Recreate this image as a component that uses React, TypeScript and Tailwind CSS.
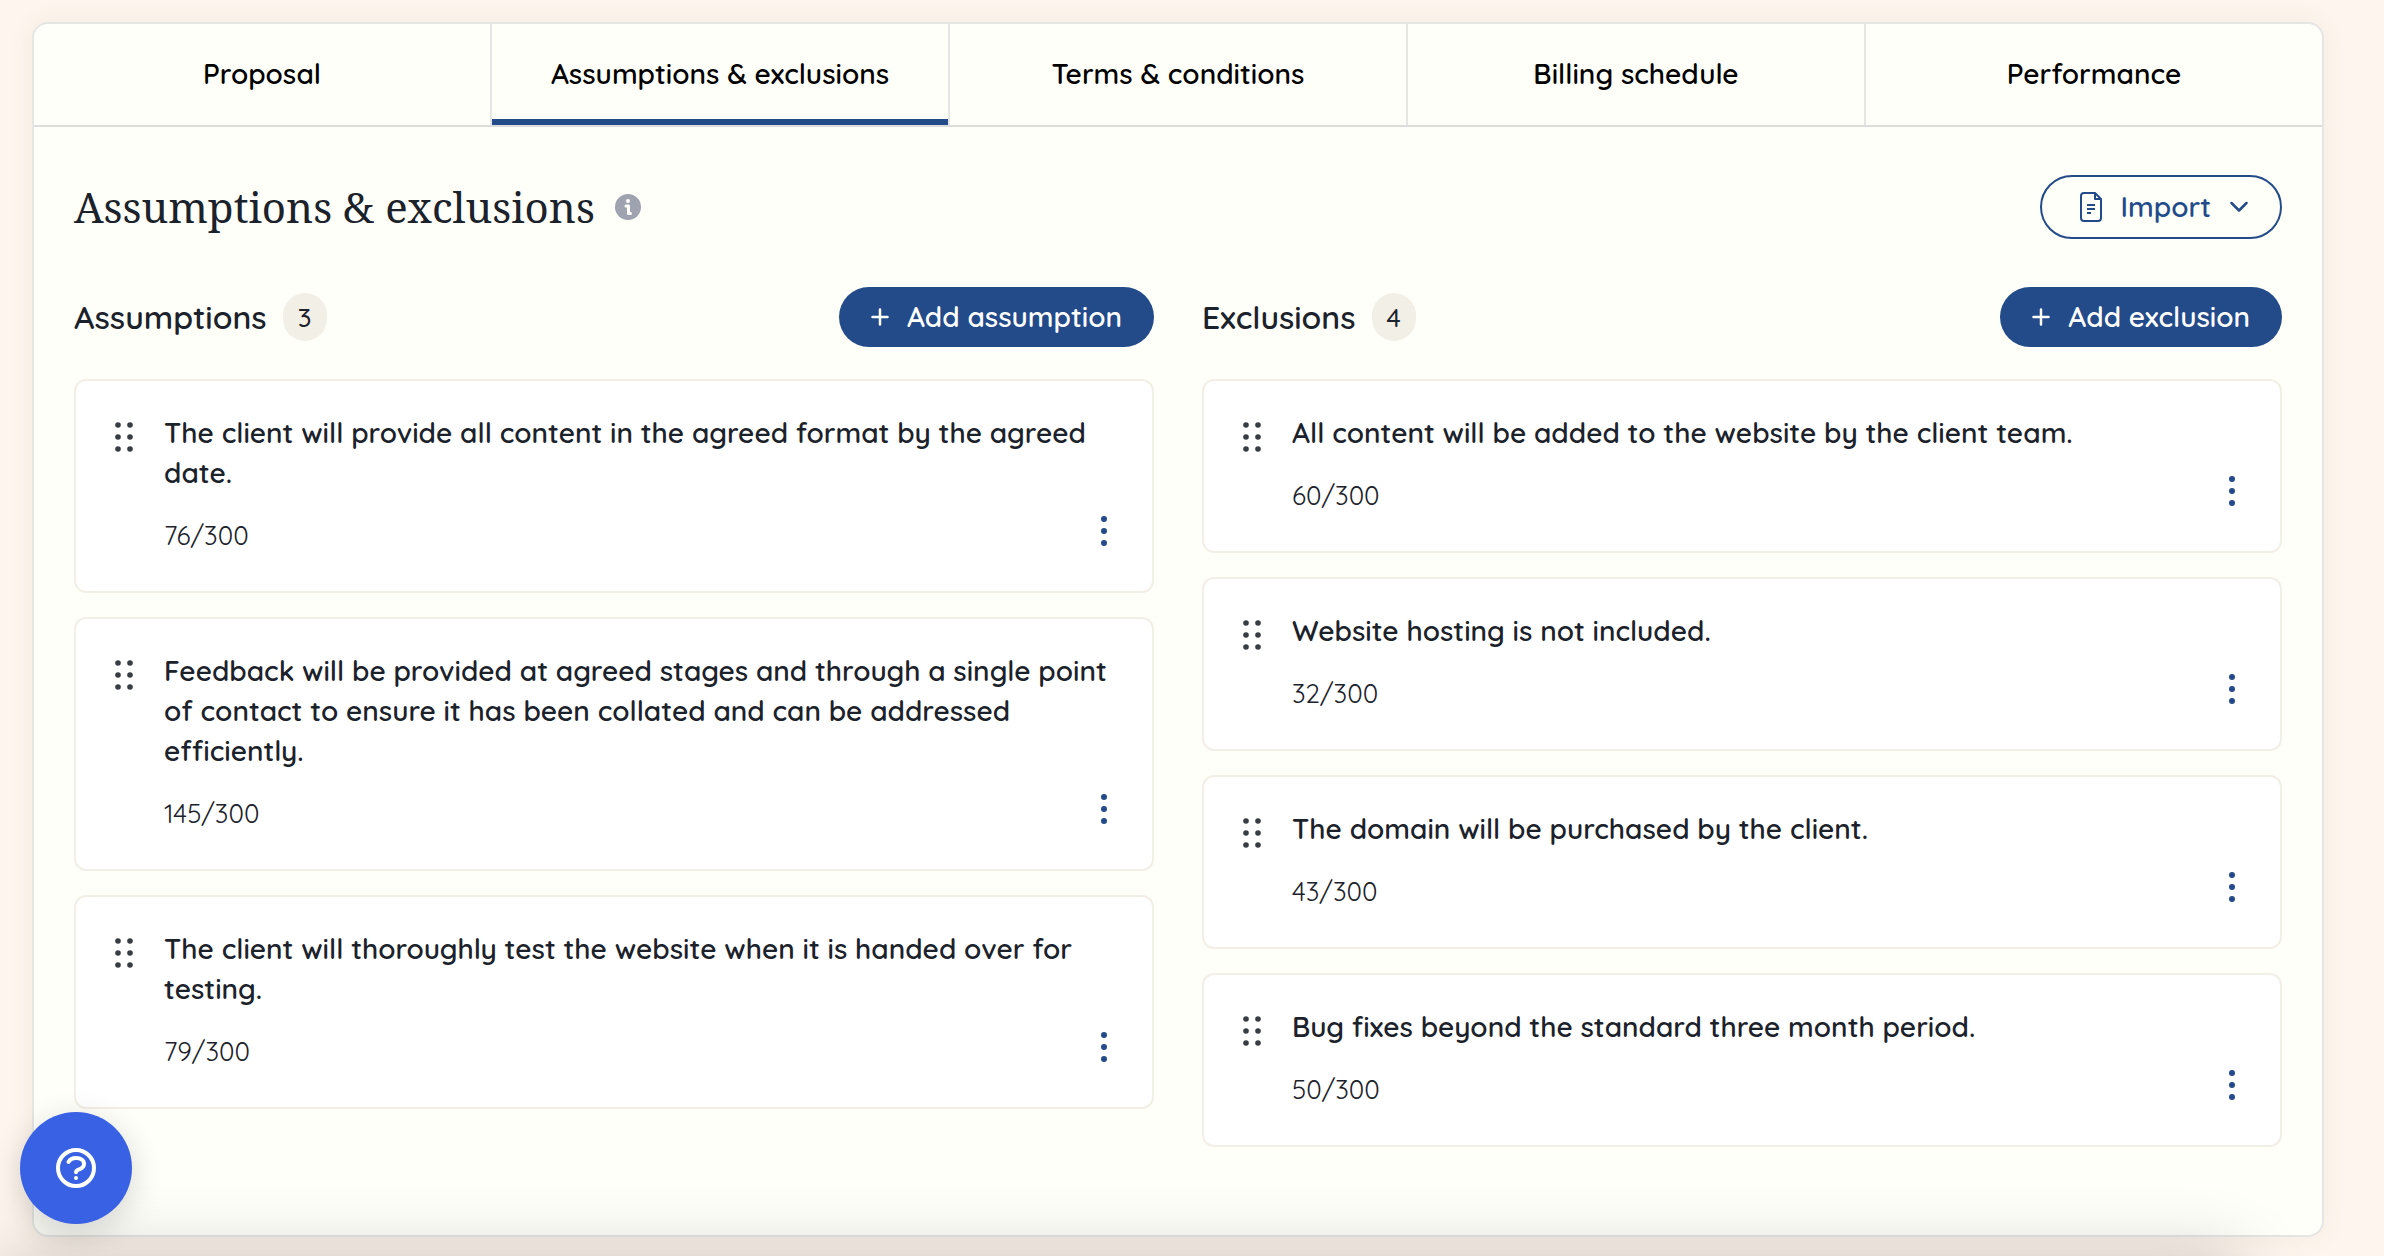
const tabs = ["Proposal", "Assumptions & exclusions", "Terms & conditions", "Billing schedule", "Performance"];

type Item = { text: string; count: string };

const assumptions: Item[] = [
  { text: "The client will provide all content in the agreed format by the agreed date.", count: "76/300" },
  {
    text: "Feedback will be provided at agreed stages and through a single point of contact to ensure it has been collated and can be addressed efficiently.",
    count: "145/300",
  },
  { text: "The client will thoroughly test the website when it is handed over for testing.", count: "79/300" },
];

const exclusions: Item[] = [
  { text: "All content will be added to the website by the client team.", count: "60/300" },
  { text: "Website hosting is not included.", count: "32/300" },
  { text: "The domain will be purchased by the client.", count: "43/300" },
  { text: "Bug fixes beyond the standard three month period.", count: "50/300" },
];

function GripIcon() {
  return (
    <svg width="20" height="32" viewBox="0 0 20 32" fill="#373d42" aria-hidden="true">
      {[4, 16].map((x) => [4, 16, 28].map((y) => <circle key={`${x}-${y}`} cx={x} cy={y} r="2.800" />))}
    </svg>
  );
}

function KebabIcon() {
  return (
    <svg width="6" height="30" viewBox="0 0 6 30" fill="#234b8a" aria-hidden="true">
      <circle cx="3" cy="3" r="3" />
      <circle cx="3" cy="15" r="3" />
      <circle cx="3" cy="27" r="3" />
    </svg>
  );
}

function PlusIcon() {
  return (
    <svg width="18" height="18" viewBox="0 0 18 18" fill="none" stroke="currentColor" strokeWidth="2.500" strokeLinecap="round" aria-hidden="true">
      <path d="M9 1.500v15M1.500 9h15" />
    </svg>
  );
}

function FileIcon() {
  return (
    <svg width="22" height="30" viewBox="0 0 22 30" fill="none" stroke="currentColor" strokeWidth="2" aria-hidden="true">
      <path d="M15 1H4a3 3 0 0 0-3 3v22a3 3 0 0 0 3 3h14a3 3 0 0 0 3-3V7L15 1v6h6" strokeLinejoin="round" />
      <path d="M7 13h8M7 17h8M7 21h4" />
    </svg>
  );
}

function InfoIcon() {
  return (
    <svg width="26" height="26" viewBox="0 0 26 26" aria-hidden="true">
      <circle cx="13" cy="13" r="13" fill="#9fa3b0" />
      <circle cx="13" cy="7" r="2" fill="#fffffa" />
      <path d="M11 12h2.500v7.500H15.500" fill="none" stroke="#fffffa" strokeWidth="3" strokeLinecap="round" strokeLinejoin="round" />
    </svg>
  );
}

function ItemCard({ item }: { item: Item }) {
  return (
    <li className="flex rounded-xl border-2 border-[#f2efe7] bg-white px-9 pt-8 pb-[30px]">
      <button type="button" aria-label="Reorder" className="mt-1.5 ml-0.5 h-9 w-5 shrink-0 cursor-grab">
        <GripIcon />
      </button>
      <div className="ml-[30px] min-w-0 flex-1">
        <p className="text-[28px] leading-10 font-semibold">{item.text}</p>
        <div className="mt-2 flex items-center justify-between">
          <span className="pt-2.5 text-[26px] leading-10 font-normal">{item.count}</span>
          <button type="button" aria-label="More options" className="flex h-[60px] w-6 items-center justify-center">
            <KebabIcon />
          </button>
        </div>
      </div>
    </li>
  );
}

function Column({ title, items, action }: { title: string; items: Item[]; action: string }) {
  return (
    <section className="min-w-0 flex-1">
      <header className="flex items-center justify-between">
        <div className="flex items-center gap-4">
          <h2 className="text-[32px] leading-10 font-semibold">{title}</h2>
          <span className="flex h-12 w-11 items-center justify-center rounded-full bg-[#f2efe7] text-[26px] font-medium">
            {items.length}
          </span>
        </div>
        <button type="button" className="flex h-[60px] items-center gap-[18px] rounded-full bg-[#234b8a] px-8 text-[28px] font-semibold text-white">
          <PlusIcon />
          {action}
        </button>
      </header>
      <ul className="mt-8 flex flex-col gap-6">
        {items.map((item) => (
          <ItemCard key={item.text} item={item} />
        ))}
      </ul>
    </section>
  );
}

export default function App() {
  return (
    <div className="relative min-h-screen overflow-hidden bg-[#fef5ee] pt-[22px] pr-[60px] pb-[19px] pl-8 font-[Quicksand,Lato,sans-serif] text-[#1b222b]">
      <main className="rounded-2xl border-2 border-[#e5e6e4] bg-[#fffffa] shadow-[0_0_24px_rgba(120,130,90,0.08)]">
        <nav className="flex border-b-2 border-[#dcdddc]">
          {tabs.map((tab, i) => (
            <button
              key={tab}
              type="button"
              aria-current={i === 1 ? "page" : undefined}
              className="flex h-[101px] flex-1 items-center justify-center border-r-2 border-[#e5e6e4] pb-0.5 text-[28px] font-semibold text-black last:border-r-0 aria-[current=page]:shadow-[inset_0_-6px_0_#234b8a]"
            >
              {tab}
            </button>
          ))}
        </nav>
        <div className="px-10 pt-12 pb-[88px]">
          <header className="flex items-center justify-between">
            <div className="flex items-center gap-5">
              <h1 className="font-['Noto_Serif','Liberation_Serif',serif] text-[42px] leading-[64px] font-normal">
                Assumptions &amp; exclusions
              </h1>
              <InfoIcon />
            </div>
            <button type="button" className="flex h-16 items-center gap-[19px] rounded-full border-2 border-[#234b8a] pr-8 pl-[38px] text-[28px] font-semibold text-[#234b8a]">
              <FileIcon />
              Import
              <svg width="18" height="12" viewBox="0 0 18 12" fill="none" stroke="currentColor" strokeWidth="2.500" strokeLinecap="round" strokeLinejoin="round" aria-hidden="true">
                <path d="M1.500 2 9 9.500 16.500 2" />
              </svg>
            </button>
          </header>
          <div className="mt-12 flex items-start gap-12">
            <Column title="Assumptions" items={assumptions} action="Add assumption" />
            <Column title="Exclusions" items={exclusions} action="Add exclusion" />
          </div>
        </div>
      </main>
      <div className="pointer-events-none absolute top-full right-36 left-0 h-20 shadow-[0_0_72px_rgba(0,0,0,0.2)]" />
      <button
        type="button"
        aria-label="Help"
        className="absolute bottom-8 left-5 flex size-28 items-center justify-center rounded-full bg-[#3862e3] shadow-[0_8px_32px_rgba(0,0,0,0.16)]"
      >
        <svg width="40" height="40" viewBox="0 0 40 40" fill="none" stroke="white" strokeWidth="4" strokeLinecap="round" strokeLinejoin="round" aria-hidden="true">
          <circle cx="20" cy="20" r="18" />
          <path d="M12.500 14c1.500-2.800 4.200-4 7.500-4 4.800 0 8 2.200 8 6 0 3.200-2.200 4.500-4.800 5.300-2.200.7-3.200 1.300-3.200 3" />
          <circle cx="20" cy="30" r="2" fill="white" stroke="none" />
        </svg>
      </button>
    </div>
  );
}
